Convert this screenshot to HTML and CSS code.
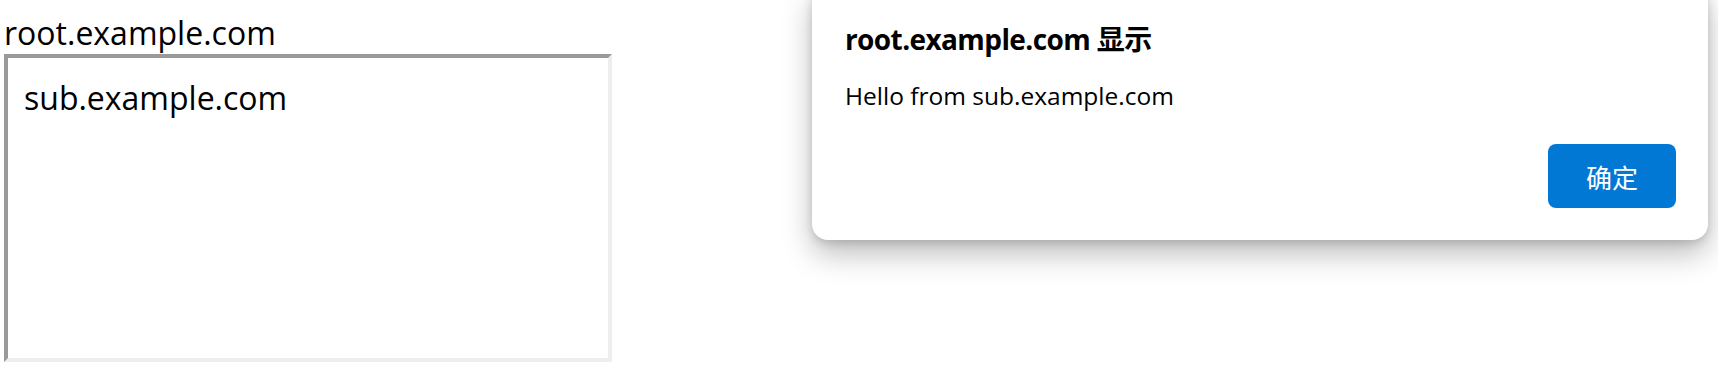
FILE: index.html
```html
<!DOCTYPE html>
<html lang="zh-CN">
<head>
<meta charset="utf-8">
<title>alert</title>
<link rel="stylesheet" href="styles.css">
</head>
<body>
<div class="page">
  <div class="label">root.example.com</div>
  <div class="frame">
    <div class="frame-body">sub.example.com</div>
  </div>
</div>
<div class="dialog" role="alertdialog">
  <div class="dialog-title">root.example.com 显示</div>
  <div class="dialog-message">Hello from sub.example.com</div>
  <div class="dialog-actions">
    <button class="btn-ok">确定</button>
  </div>
</div>
</body>
</html>
```

FILE: styles.css
```css
html, body {
  margin: 0;
  padding: 0;
  background: #ffffff;
}
body {
  font-family: "Open Sans", "Noto Sans", "Noto Sans CJK SC", sans-serif;
  color: #000;
  position: relative;
  width: 1718px;
  height: 376px;
  overflow: hidden;
}
.page {
  padding: 14px 0 0 4px;
  display: flex;
  flex-direction: column;
  align-items: flex-start;
}
.label {
  font-size: 32px;
  line-height: 38px;
  height: 38px;
  white-space: nowrap;
}
.frame {
  margin-top: 2px;
  width: 600px;
  height: 300px;
  border-style: solid;
  border-width: 4px;
  border-color: #9a9a9a #eeeeee #eeeeee #9a9a9a;
  background: #fff;
}
.frame-body {
  padding: 20px 16px 16px 16px;
  font-size: 32px;
  line-height: 40px;
  white-space: nowrap;
}
.dialog {
  position: absolute;
  top: -16px;
  left: 812px;
  width: 896px;
  box-sizing: border-box;
  padding: 36px 32px 32px 33px;
  background: #fff;
  border-radius: 16px;
  box-shadow: 0 14px 30px rgba(0, 0, 0, 0.26), 0 3px 8px rgba(0, 0, 0, 0.14);
  display: flex;
  flex-direction: column;
}
.dialog-title {
  font-family: "Open Sans", "Noto Sans CJK SC", sans-serif;
  font-weight: 700;
  font-size: 28px;
  letter-spacing: -0.6px;
  line-height: 38px;
  white-space: nowrap;
}
.dialog-message {
  margin-top: 21px;
  font-size: 24.5px;
  line-height: 34px;
  white-space: nowrap;
}
.dialog-actions {
  margin-top: 31px;
  display: flex;
  justify-content: flex-end;
}
.btn-ok {
  width: 128px;
  height: 64px;
  border: none;
  border-radius: 8px;
  background: #0078d4;
  color: #fff;
  font-family: "Noto Sans CJK SC", sans-serif;
  font-size: 26px;
  padding: 0;
}
```
